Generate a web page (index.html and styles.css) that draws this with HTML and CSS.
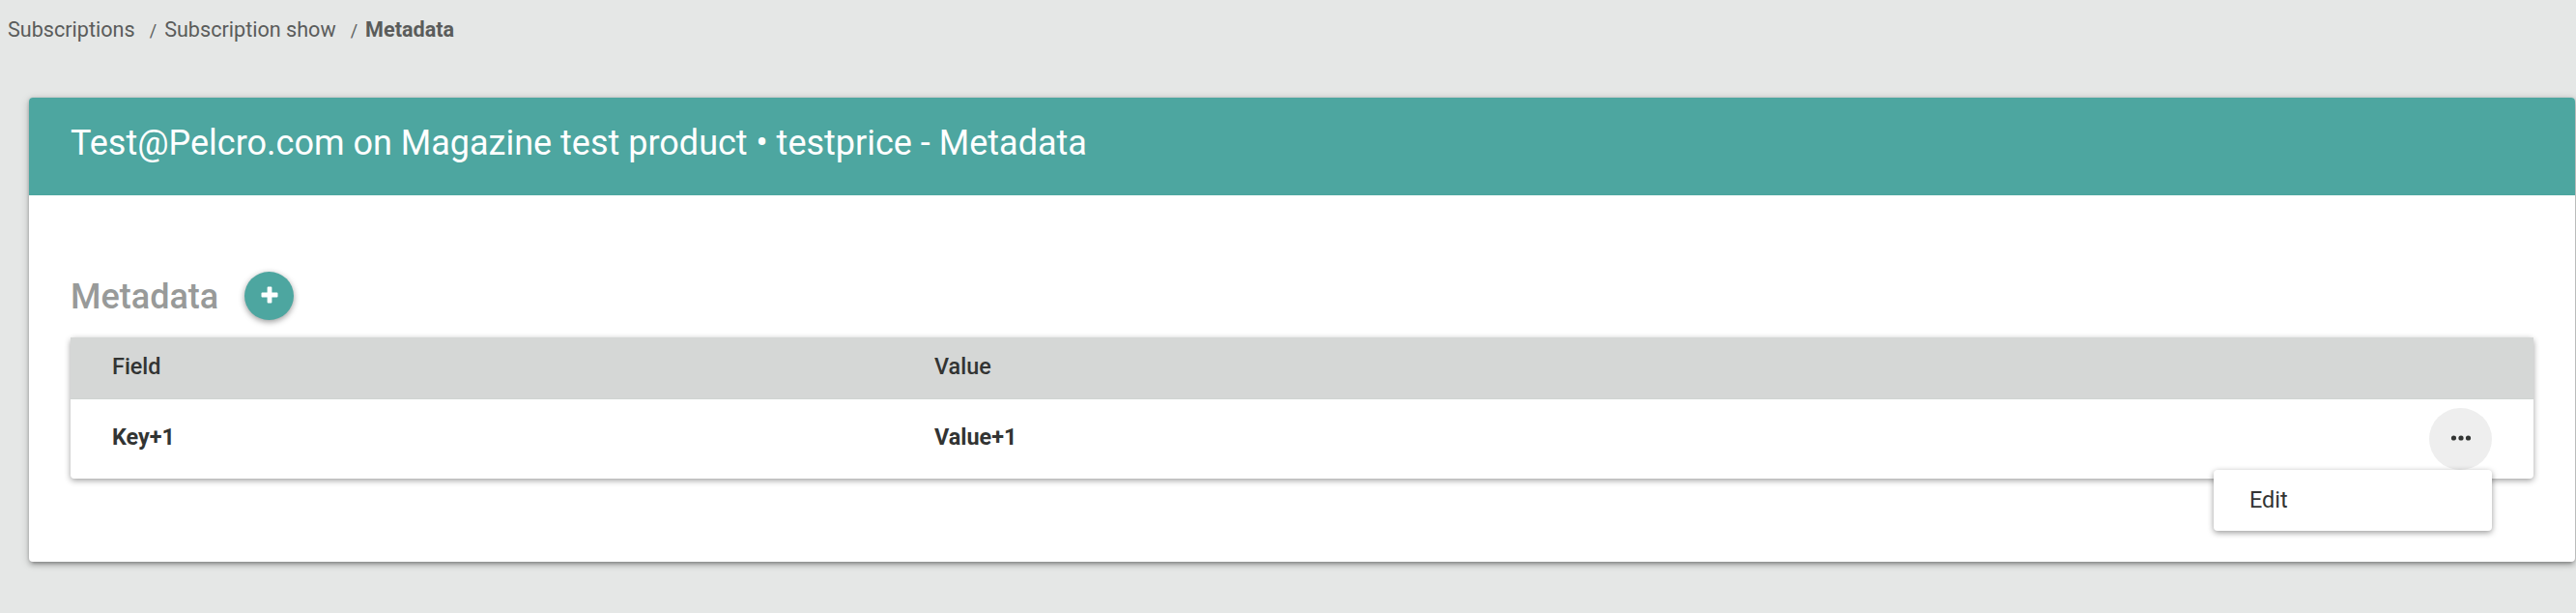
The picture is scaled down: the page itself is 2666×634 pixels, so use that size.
FILE: index.html
```html
<!DOCTYPE html>
<html lang="en">
<head>
    <meta charset="UTF-8">
    <meta name="viewport" content="width=device-width, initial-scale=1.0">
    <title>Metadata</title>
    <link rel="stylesheet" href="styles.css">
</head>
<body>
    <nav class="breadcrumb">
        <a href="#">Subscriptions</a>
        <span class="separator">/</span>
        <a href="#">Subscription show</a>
        <span class="separator">/</span>
        <span class="current">Metadata</span>
    </nav>

    <main class="card">
        <header class="card-header">
            <h1>Test@Pelcro.com on Magazine test product • testprice - Metadata</h1>
        </header>
        <div class="card-body">
            <div class="section-title">
                <h2>Metadata</h2>
                <button type="button" class="add-button" aria-label="Add">
                    <svg width="18" height="18" viewBox="0 0 18 18">
                        <path d="M7.6 0.5h2.8q1 0 1 1V6.6h5.1q1 0 1 1v2.8q0 1-1 1h-5.1v5.1q0 1-1 1H7.6q-1 0-1-1v-5.1H1.5q-1 0-1-1V7.6q0-1 1-1h5.1V1.5q0-1 1-1z" fill="#fff"/>
                    </svg>
                </button>
            </div>

            <div class="table">
                <div class="row head">
                    <div>Field</div>
                    <div>Value</div>
                </div>
                <div class="row">
                    <div>Key+1</div>
                    <div>Value+1</div>
                    <div class="actions">
                        <button type="button" class="more-button" aria-label="Actions">
                            <svg width="22" height="6" viewBox="0 0 22 6">
                                <circle cx="3.5" cy="3" r="2.6"/>
                                <circle cx="11" cy="3" r="2.6"/>
                                <circle cx="18.5" cy="3" r="2.6"/>
                            </svg>
                        </button>
                        <div class="menu">
                            <a href="#">Edit</a>
                        </div>
                    </div>
                </div>
            </div>
        </div>
    </main>
</body>
</html>
```
FILE: styles.css
```css
* {
    box-sizing: border-box;
}
body {
    margin: 0;
    min-height: 100vh;
    background-color: #e5e7e6;
    color: #323433;
    font-family: Roboto, sans-serif;
    font-size: 23.4px;
}
a {
    color: inherit;
    text-decoration: none;
}
h1, h2 {
    margin: 0;
    font-size: 36px;
    line-height: 44px;
}
button {
    display: flex;
    align-items: center;
    justify-content: center;
    padding: 0;
    border: none;
    border-radius: 50%;
    cursor: pointer;
}
.breadcrumb {
    display: flex;
    height: 101px;
    padding: 15px 8px 0;
    color: #5a5c5b;
    font-size: 21.6px;
    line-height: 32px;
}
.separator {
    padding: 1px 8px 0 15px;
    font-size: 18px;
}
.current {
    font-weight: 700;
}
.card {
    height: 480px;
    margin: 0 1px 0 30px;
    border-radius: 4px;
    background-color: #fff;
    box-shadow: 0 4px 4px rgba(0, 0, 0, 0.14), 0 6px 2px -4px rgba(0, 0, 0, 0.12), 0 2px 10px rgba(0, 0, 0, 0.2), 0 0 3px rgba(0, 0, 0, 0.15);
}
.card-header {
    height: 101px;
    padding: 25px 43px 0;
    border-radius: 4px 4px 0 0;
    background-color: #4da6a0;
    color: #fff;
}
.card-header h1 {
    font-weight: 400;
}
.card-body {
    padding: 79px 43px 0;
}
.section-title {
    display: flex;
    align-items: center;
    gap: 27px;
    height: 50px;
    margin-bottom: 18px;
}
.section-title h2 {
    padding-top: 2px;
    color: #989a99;
    font-weight: 500;
}
.add-button {
    width: 51px;
    height: 50px;
    padding-bottom: 3px;
    background-color: #4da6a0;
    box-shadow: 0 2px 6px rgba(0, 0, 0, 0.4);
}
.table {
    border-radius: 4px;
    background-color: #fff;
    box-shadow: 0 2px 6px rgba(0, 0, 0, 0.38);
}
.row {
    display: grid;
    grid-template-columns: 851px 1fr 65px;
    height: 82px;
    padding: 0 43px;
    font-weight: 700;
    line-height: 79px;
}
.row.head {
    height: 64px;
    border-bottom: 1px solid #cfd4d2;
    background-color: #d5d7d6;
    font-weight: 500;
    line-height: 60px;
}
.actions {
    position: relative;
    padding-top: 9px;
}
.more-button {
    width: 65px;
    height: 64px;
    padding-bottom: 3px;
    background-color: #eee;
    fill: #323433;
}
.menu {
    position: absolute;
    top: 73px;
    right: 0;
    width: 288px;
    height: 63px;
    padding-left: 37px;
    border-radius: 4px;
    background-color: #fff;
    box-shadow: 0 2px 6px rgba(0, 0, 0, 0.4);
    font-weight: 400;
    line-height: 62px;
}
```
